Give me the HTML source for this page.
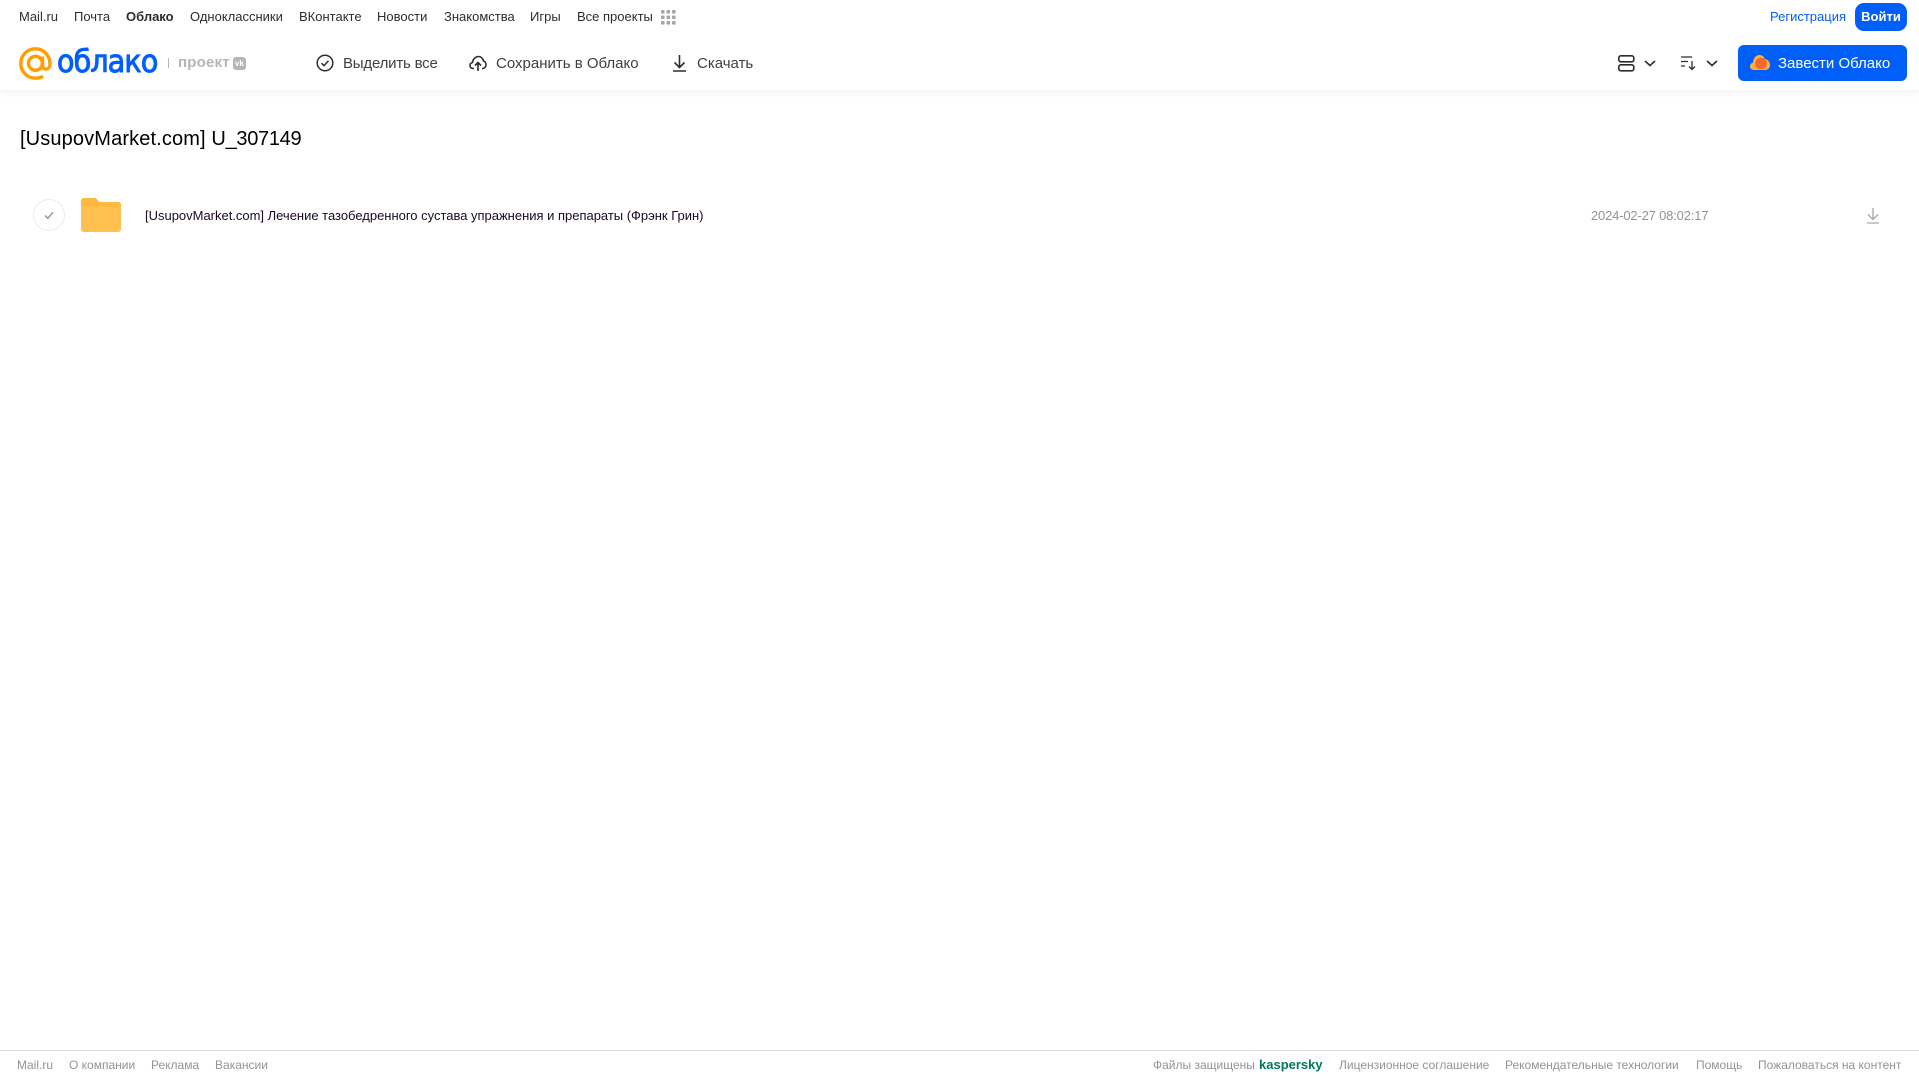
<!DOCTYPE html>
<html lang="ru"><head><meta charset="utf-8"><title>Облако</title>
<style>
html,body{margin:0;padding:0;background:#fff;width:1919px;height:1079px;overflow:hidden}
body{font-family:"Liberation Sans",Arial,sans-serif;position:relative}
.t{position:absolute;white-space:nowrap;line-height:16px}
.n{font-size:13px;color:#2c2d2e;top:9px}
.a{font-size:15px;color:#3f3f42;top:55px;line-height:18px}
.f{font-size:12px;color:#919399;top:1057px}
svg{position:absolute;overflow:visible}
#h{position:absolute;left:0;top:0;width:1919px;height:90px;background:#fff;box-shadow:0 2px 8px rgba(0,0,0,.06)}
</style></head><body>
<div id="h"></div>
<span class="t n" style="left:19px">Mail.ru</span>
<span class="t n" style="left:74px">Почта</span>
<span class="t n" style="left:126px;font-weight:bold">Облако</span>
<span class="t n" style="left:190px">Одноклассники</span>
<span class="t n" style="left:299px">ВКонтакте</span>
<span class="t n" style="left:377px">Новости</span>
<span class="t n" style="left:444px">Знакомства</span>
<span class="t n" style="left:530px">Игры</span>
<span class="t n" style="left:577px">Все проекты</span>
<svg style="left:661px;top:10px" width="15" height="15" fill="#a5a6aa"><rect width="3.6" height="3.6" rx="1"/><rect x="5.5" width="3.6" height="3.6" rx="1"/><rect x="11" width="3.6" height="3.6" rx="1"/><rect y="5.5" width="3.6" height="3.6" rx="1"/><rect x="5.5" y="5.5" width="3.6" height="3.6" rx="1"/><rect x="11" y="5.5" width="3.6" height="3.6" rx="1"/><rect y="11" width="3.6" height="3.6" rx="1"/><rect x="5.5" y="11" width="3.6" height="3.6" rx="1"/><rect x="11" y="11" width="3.6" height="3.6" rx="1"/></svg>
<span class="t n" style="left:1770px;color:#005ff9">Регистрация</span>
<div style="position:absolute;left:1855px;top:3px;width:52px;height:28px;background:#005ff9;border-radius:9px;color:#fff;font-size:13px;font-weight:bold;line-height:28px;text-align:center">Войти</div>

<svg style="left:19px;top:47px" width="33" height="33" viewBox="0 0 33 33" fill="none" stroke="#ff9e00" stroke-width="3.4"><circle cx="16.5" cy="16.3" r="7"/><path d="M23.5 9.5v9c0 5 7.500 5 7.500-1.500C31 8 24 1.800 16.500 1.800 8 1.800 1.800 8.500 1.800 16.500S8 31.200 16.500 31.200c3 0 5.500-.7 7.500-2"/></svg>
<span class="t" style="left:57px;top:44px;font-size:31px;line-height:36px;color:#005ff9;font-family:'DejaVu Sans',sans-serif;letter-spacing:-.9px;transform:scaleX(.92);transform-origin:0 50%;-webkit-text-stroke:1px #005ff9">облако</span>
<div style="position:absolute;left:168px;top:58px;width:1px;height:10px;background:#b5b6ba"></div>
<span class="t" style="left:178px;top:55px;font-size:15px;font-weight:bold;color:#b4b5b9;letter-spacing:.2px">проект</span>
<div style="position:absolute;left:233px;top:57px;width:13px;height:13px;background:#b4b5b9;border-radius:3px;color:#fff;font-size:8px;font-weight:bold;line-height:13px;text-align:center">vk</div>

<svg style="left:316px;top:54px" width="18" height="18" viewBox="0 0 18 18" fill="none" stroke="#2c2d2e" stroke-width="1.500"><circle cx="9" cy="9" r="7.800"/><path d="M5.500 9.200l2.500 2.500 4.500-5"/></svg>
<span class="t a" style="left:343px;letter-spacing:-.2px">Выделить все</span>
<svg style="left:469px;top:54px" width="18" height="18" viewBox="0 0 18 18" fill="none" stroke="#2c2d2e" stroke-width="1.600"><path d="M5 14.500H4C2 14.500 1 13 1 11.500S2 8.800 3.500 8.500C4 5 6.500 2.500 9.500 2.500c2.500 0 4.500 2 5 4.500 1.500.5 2.500 2 2.500 3.700 0 2-1.500 3.800-3.500 3.800H13"/><path d="M9 17V9M6 11.500L9 8.500l3 3"/></svg>
<span class="t a" style="left:496px">Сохранить в Облако</span>
<svg style="left:672px;top:54px" width="15" height="18" viewBox="0 0 15 18" fill="none" stroke="#2c2d2e" stroke-width="1.600"><path d="M7.500 1v12M2.500 8.500l5 5 5-5M1 17h13"/></svg>
<span class="t a" style="left:697px">Скачать</span>

<svg style="left:1618px;top:55px" width="17" height="17" viewBox="0 0 17 17" fill="none" stroke="#2c2d2e" stroke-width="1.600"><rect x=".8" y=".8" width="15" height="6" rx="2"/><rect x=".8" y="9.800" width="15" height="6" rx="2"/></svg>
<svg style="left:1644px;top:60px" width="12" height="7" viewBox="0 0 12 7" fill="none" stroke="#2c2d2e" stroke-width="1.600"><path d="M1 1l5 4.500L11 1"/></svg>
<svg style="left:1681px;top:56px" width="16" height="14" viewBox="0 0 16 14" fill="none" stroke="#2c2d2e" stroke-width="1.300"><path d="M0 1h11M0 5.500h7M0 10h4M11 5v8M8 10.500l3 3 3-3"/></svg>
<svg style="left:1706px;top:60px" width="12" height="7" viewBox="0 0 12 7" fill="none" stroke="#2c2d2e" stroke-width="1.600"><path d="M1 1l5 4.500L11 1"/></svg>
<div style="position:absolute;left:1738px;top:45px;width:169px;height:36px;background:#005ff9;border-radius:6px"></div>
<svg style="left:1750px;top:54px" width="20" height="17" viewBox="0 0 20 17"><path d="M4 16C1.500 16 0 14.500 0 12.300 0 10.300 1.500 9 3 8.800 3.300 4 6 1 9.500 1c2.500 0 4.500 1.500 5.300 4C17.800 5.300 20 8 20 11c0 3-2.300 5-5 5z" fill="#ffb03b"/><circle cx="11" cy="9.500" r="5.800" fill="#f4692a"/></svg>
<span class="t" style="left:1778px;top:55px;font-size:15px;line-height:18px;color:#fff">Завести Облако</span>

<span class="t" style="left:20px;top:127px;font-size:20px;line-height:24px;color:#000"><span style="letter-spacing:.13px">[UsupovMarket.com] </span><span style="letter-spacing:-.3px">U_307149</span></span>

<svg style="left:33px;top:199px" width="32" height="32" viewBox="0 0 32 32" fill="#fff" stroke="#ebecee"><circle cx="16" cy="16" r="15.500"/><path d="M12 16.500l2.800 2.800 5.200-6" fill="none" stroke="#919399" stroke-width="1.400"/></svg>
<svg style="left:81px;top:198px" width="40" height="34" viewBox="0 0 40 34"><path d="M3 0h10c2 0 3 1 4 2.500L18 4h19c1.700 0 3 1.300 3 3v24c0 1.700-1.300 3-3 3H3c-1.700 0-3-1.300-3-3V3C0 1.300 1.300 0 3 0z" fill="#ffc04f"/><path d="M0 8.500h40V7c0-1.700-1.300-3-3-3H18l-1-1.500C16 1 15 0 13 0H3C1.300 0 0 1.300 0 3z" fill="#ffb93d"/></svg>
<span class="t" style="left:145px;top:208px;font-size:13px;letter-spacing:-.01px;color:#1a0a24">[UsupovMarket.com] Лечение тазобедренного сустава упражнения и препараты (Фрэнк Грин)</span>
<span class="t" style="left:1591px;top:208px;font-size:13px;letter-spacing:-.18px;color:#929396">2024-02-27 08:02:17</span>
<svg style="left:1866px;top:207px" width="14" height="17" viewBox="0 0 14 17" fill="none" stroke="#a5a6aa" stroke-width="1.300"><path d="M7 1v11M2 7.500l5 5 5-5M1 16h12"/></svg>

<div style="position:absolute;left:0;top:1050px;width:1919px;height:1px;background:#dcdcde"></div>
<span class="t f" style="left:17px">Mail.ru</span>
<span class="t f" style="left:69px">О компании</span>
<span class="t f" style="left:151px">Реклама</span>
<span class="t f" style="left:215px">Вакансии</span>
<span class="t f" style="left:1153px">Файлы защищены</span>
<span class="t" style="left:1259px;top:1057px;font-size:13px;font-weight:bold;color:#00785e">kaspersky</span>
<span class="t f" style="left:1339px">Лицензионное соглашение</span>
<span class="t f" style="left:1505px">Рекомендательные технологии</span>
<span class="t f" style="left:1696px">Помощь</span>
<span class="t f" style="left:1758px">Пожаловаться на контент</span>
</body></html>
